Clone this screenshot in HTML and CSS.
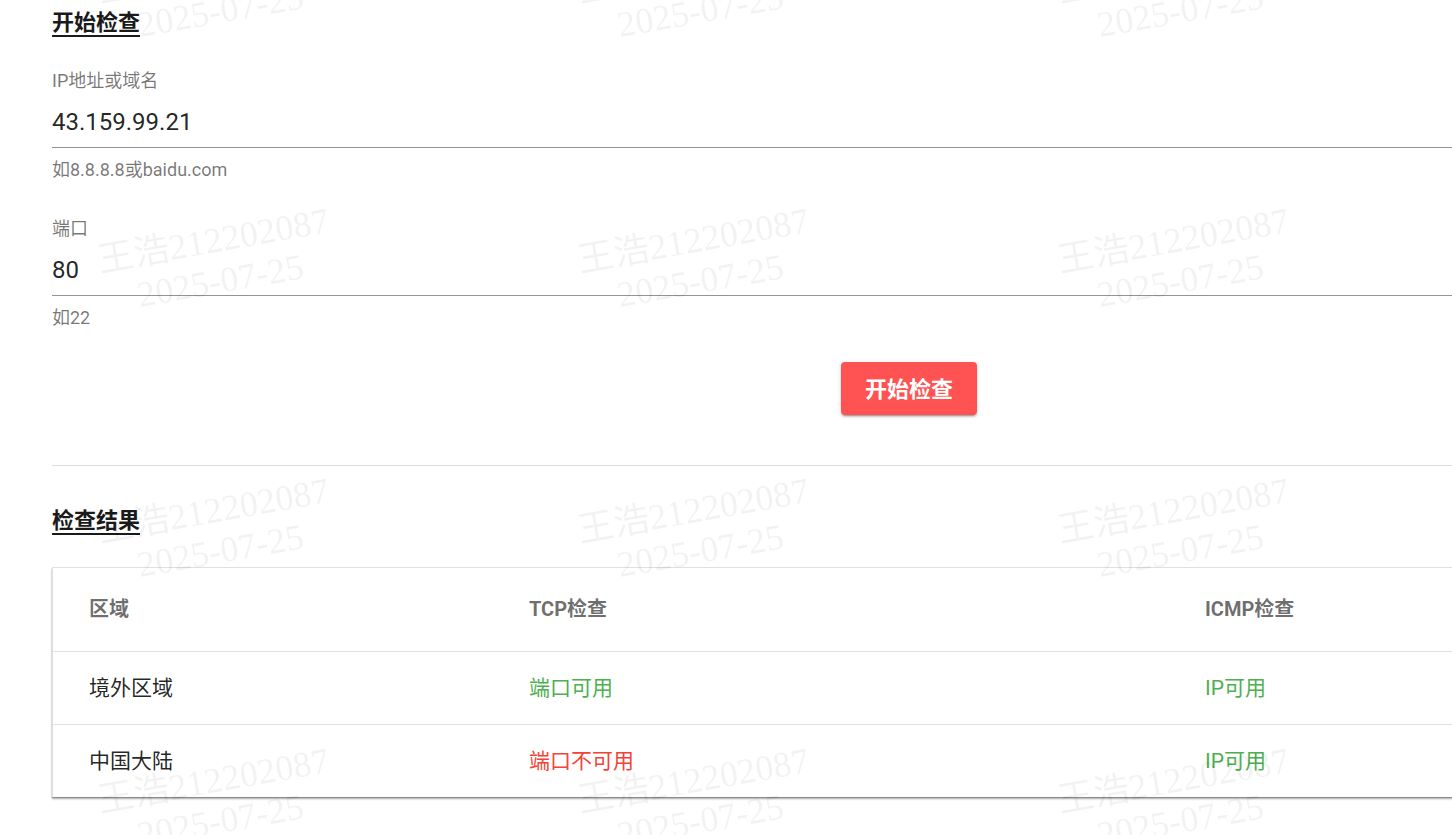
FILE: index.html
```html
<!DOCTYPE html>
<html lang="zh-CN">
<head>
    <meta charset="UTF-8">
    <meta name="viewport" content="width=device-width, initial-scale=1.0">
    <title>端口检查</title>
    <link rel="stylesheet" href="styles.css">
</head>
<body>
    <div class="page">
        <!-- 输入区 -->
        <h2 class="title first">开始检查</h2>

        <div class="field">
            <label class="label">IP地址或域名</label>
            <div class="value">43.159.99.21</div>
            <div class="hint">如8.8.8.8或baidu.com</div>
        </div>

        <div class="field">
            <label class="label">端口</label>
            <div class="value">80</div>
            <div class="hint">如22</div>
        </div>

        <button class="btn">开始检查</button>

        <div class="divider"></div>

        <!-- 结果 -->
        <h2 class="title second">检查结果</h2>

        <div class="card">
            <div class="row head">
                <div class="cell">区域</div>
                <div class="cell">TCP检查</div>
                <div class="cell">ICMP检查</div>
            </div>
            <div class="row line">
                <div class="cell">境外区域</div>
                <div class="cell ok">端口可用</div>
                <div class="cell ok">IP可用</div>
            </div>
            <div class="row">
                <div class="cell">中国大陆</div>
                <div class="cell bad">端口不可用</div>
                <div class="cell ok">IP可用</div>
            </div>
        </div>
    </div>

    <!-- 水印 -->
    <div class="watermark">
        <div class="mark"><span>王浩212202087<br>2025-07-25</span></div>
        <div class="mark"><span>王浩212202087<br>2025-07-25</span></div>
        <div class="mark"><span>王浩212202087<br>2025-07-25</span></div>
        <div class="mark"><span>王浩212202087<br>2025-07-25</span></div>
        <div class="mark"><span>王浩212202087<br>2025-07-25</span></div>
        <div class="mark"><span>王浩212202087<br>2025-07-25</span></div>
        <div class="mark"><span>王浩212202087<br>2025-07-25</span></div>
        <div class="mark"><span>王浩212202087<br>2025-07-25</span></div>
        <div class="mark"><span>王浩212202087<br>2025-07-25</span></div>
        <div class="mark"><span>王浩212202087<br>2025-07-25</span></div>
        <div class="mark"><span>王浩212202087<br>2025-07-25</span></div>
        <div class="mark"><span>王浩212202087<br>2025-07-25</span></div>
        <div class="mark"><span>王浩212202087<br>2025-07-25</span></div>
        <div class="mark"><span>王浩212202087<br>2025-07-25</span></div>
        <div class="mark"><span>王浩212202087<br>2025-07-25</span></div>
        <div class="mark"><span>王浩212202087<br>2025-07-25</span></div>
    </div>
</body>
</html>
```

FILE: styles.css
```css
*{
    box-sizing: border-box;
}
html{
    overflow: hidden;
    background: #ffffff;
}
body{
    margin: 0;
    padding-bottom: 20px;
    font-family: Roboto, "Noto Sans CJK SC", sans-serif;
    color: rgba(0, 0, 0, .87);
}
.page{
    width: 1766px;
    padding-left: 52px;
}
.title{
    display: inline-block;
    margin: 0;
    font-size: 22px;
    line-height: 24px;
    font-weight: bold;
    color: #1a1a1a;
    border-bottom: 2px solid #1a1a1a;
}
.title.first{
    margin-top: 11px;
}
.title.second{
    margin-top: 43px;
}
.field{
    margin-top: 32px;
}
.field + .field{
    margin-top: 35px;
}
.label{
    display: block;
    font-size: 18px;
    line-height: 24px;
    color: rgba(0, 0, 0, .54);
}
.value{
    margin-top: 14px;
    padding-bottom: 10px;
    font-size: 24px;
    line-height: 30px;
    border-bottom: 1px solid rgba(0, 0, 0, .42);
}
.hint{
    margin-top: 10px;
    font-size: 18px;
    line-height: 24px;
    color: rgba(0, 0, 0, .54);
}
.btn{
    display: block;
    margin: 32px auto 0;
    width: 136px;
    height: 53px;
    padding: 0 0 4px;
    border: 0;
    border-radius: 4px;
    background-color: #ff5252;
    color: #ffffff;
    font-family: Roboto, "Noto Sans CJK SC", sans-serif;
    font-size: 22px;
    font-weight: bold;
    box-shadow: 0 3px 1px -2px rgba(0,0,0,.2), 0 2px 2px 0 rgba(0,0,0,.14), 0 1px 5px 0 rgba(0,0,0,.12);
}
.divider{
    margin-top: 50px;
    border-top: 1px solid #dddddd;
}
.card{
    margin-top: 32px;
    border: 1px solid #e0e0e0;
    border-bottom: 0;
    box-shadow: 0 2px 2px rgba(0,0,0,.3), 0 1px 1px rgba(0,0,0,.25);
}
.row{
    display: grid;
    grid-template-columns: 440px 676px 1fr;
    align-items: center;
    height: 72px;
    padding-bottom: 4px;
    font-size: 21px;
}
.row.head{
    height: 84px;
    border-bottom: 1px solid #e0e0e0;
    font-size: 20px;
    font-weight: bold;
    color: rgba(0, 0, 0, .58);
}
.row.line{
    height: 73px;
    border-bottom: 1px solid #e0e0e0;
}
.cell{
    padding-left: 36px;
}
.ok{
    color: #4caf50;
}
.bad{
    color: #f44336;
}
.watermark{
    position: fixed;
    left: -23px;
    top: -144px;
    display: grid;
    grid-template-columns: repeat(4, 480px);
    grid-auto-rows: 270px;
    pointer-events: none;
}
.mark{
    display: flex;
    align-items: center;
    justify-content: center;
}
.mark span{
    transform: rotate(-10deg);
    text-align: center;
    white-space: nowrap;
    font-family: "Liberation Serif", "Noto Sans CJK SC", serif;
    font-size: 36px;
    line-height: 41px;
    color: rgba(0, 0, 0, .05);
}
```
